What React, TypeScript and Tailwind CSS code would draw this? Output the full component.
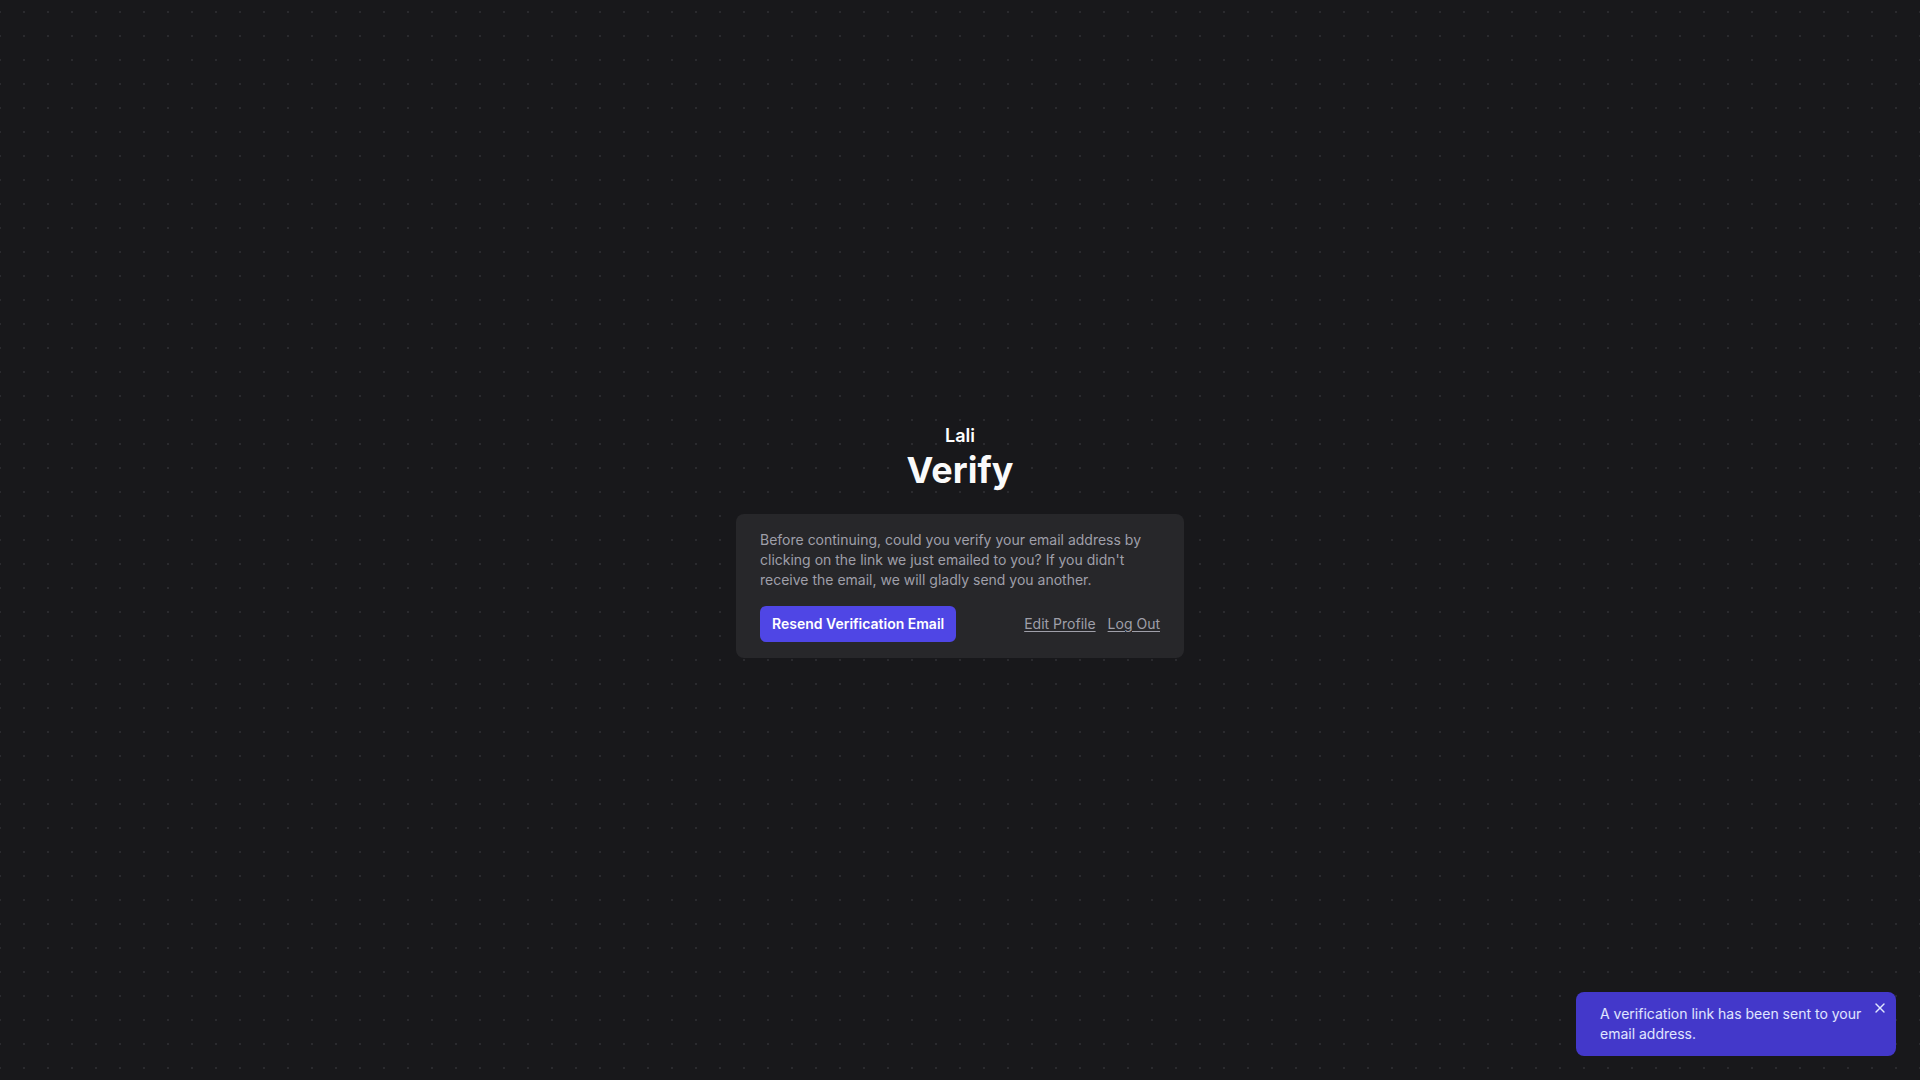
import { X } from 'lucide-react';

export default function App() {
  return (
    <div className="relative min-h-screen bg-[#18181b] bg-[radial-gradient(circle,#2a2a2e_1px,transparent_1.2px)] bg-[size:24px_24px] bg-[position:-12px_0] font-['Inter',sans-serif] antialiased">
      <div className="flex min-h-screen flex-col items-center justify-center">
        {/* Header */}
        <div className="text-center">
          <p className="text-lg font-semibold leading-7 text-white">Lali</p>
          <h1 className="text-4xl font-bold leading-10 text-zinc-50">Verify</h1>
        </div>

        {/* Card */}
        <div className="mt-6 w-[448px] rounded-lg bg-[#27272a] px-6 py-4">
          <p className="text-sm leading-5 text-zinc-400">
            Before continuing, could you verify your email address by clicking on the link we just
            emailed to you? If you didn't receive the email, we will gladly send you another.
          </p>
          <div className="mt-4 flex items-center justify-between">
            <button className="h-9 rounded-md bg-[#4f46e5] px-3 text-sm font-semibold text-white">
              Resend Verification Email
            </button>
            <div className="flex items-center gap-3">
              <a href="#" className="text-sm text-zinc-400 underline underline-offset-2">
                Edit Profile
              </a>
              <a href="#" className="text-sm text-zinc-400 underline underline-offset-2">
                Log Out
              </a>
            </div>
          </div>
        </div>
      </div>

      {/* Toast */}
      <div className="absolute bottom-6 right-6 w-[320px] rounded-lg bg-[#4338ca] py-3 pl-6 pr-8">
        <p className="text-sm leading-5 text-indigo-100">
          A verification link has been sent to your email address.
        </p>
        <button className="absolute right-2 top-2 text-indigo-100">
          <X size={16} strokeWidth={2} />
        </button>
      </div>
    </div>
  );
}
